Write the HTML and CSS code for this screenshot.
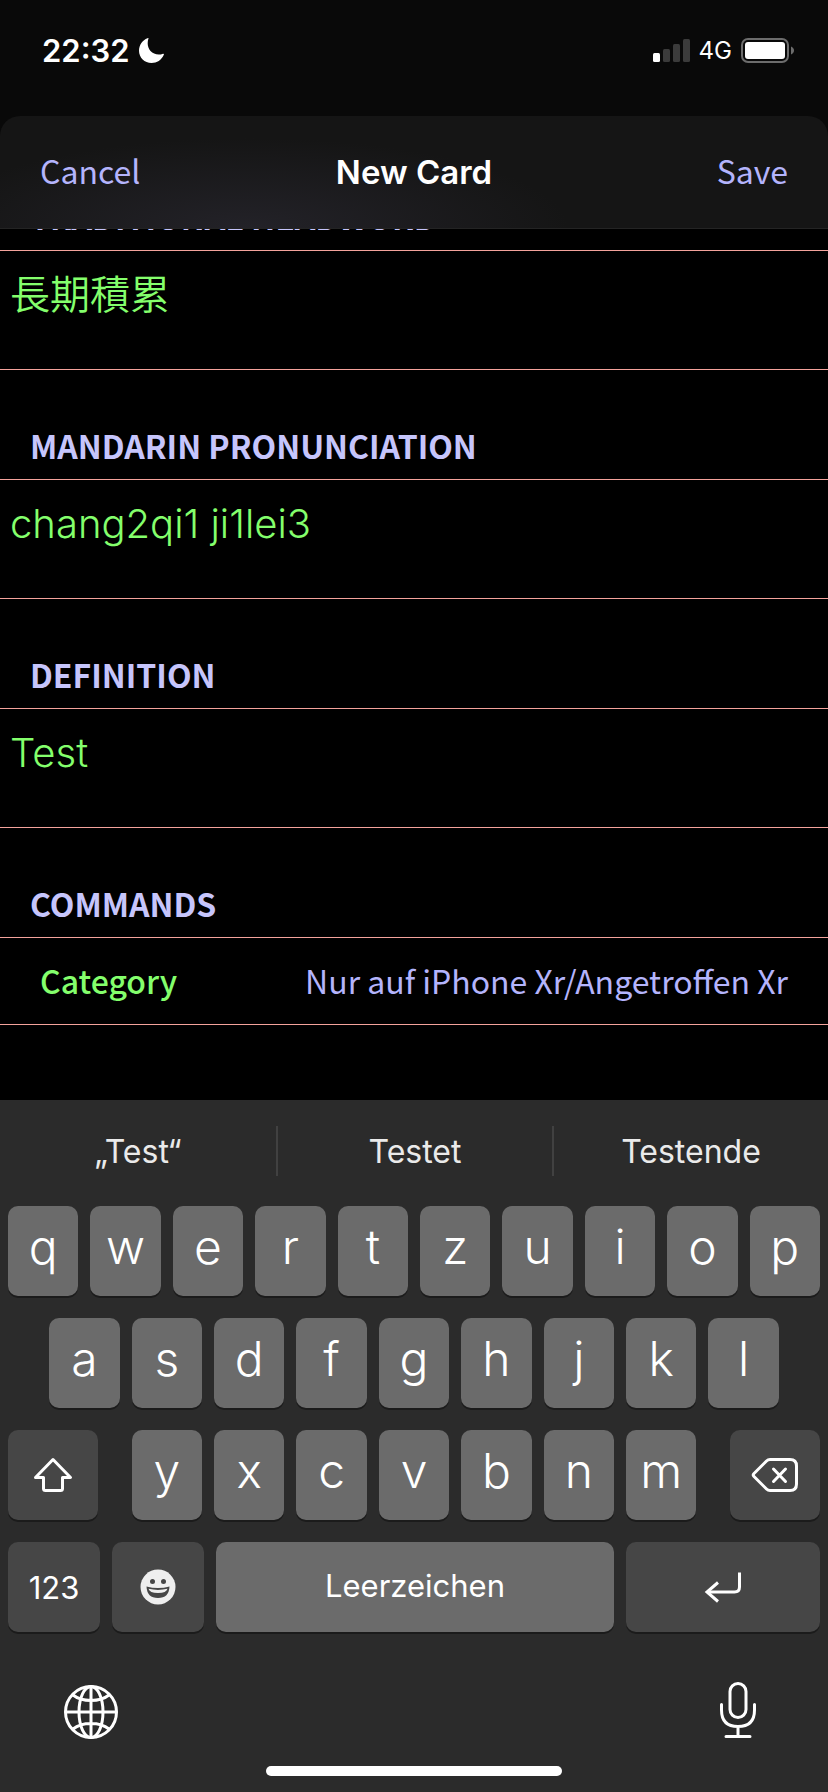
FILE: index.html
```html
<!DOCTYPE html>
<html lang="en">
<head>
  <meta charset="UTF-8">
  <meta name="viewport" content="width=device-width, initial-scale=1">
  <title>New Card</title>
  <link rel="stylesheet" href="styles.css">
</head>
<body>
  <div class="status-bar">
    <div class="status-left">
      <span class="time">22:32</span>
      <svg class="moon" viewBox="0 0 25 25" width="25" height="25"><path d="M9.500 0.300C8 5 8.500 9.500 11.500 13C14.500 16.300 19.500 17.500 24 15.700C25 15.400 25.100 16.200 24.700 17C22.500 22 18 25 12.500 25C5.500 25 0 19.500 0 12.700C0 7 3.500 2 8.500 0.200C9.200 0 9.600 0 9.500 0.300Z" fill="#fff"/></svg>
    </div>
    <div class="status-right">
      <svg viewBox="0 0 37 23" width="37" height="23">
        <rect x="0" y="14" width="7" height="9" rx="1.500" fill="#fff"/>
        <rect x="10" y="10" width="7" height="13" rx="1.500" fill="#3b3b3b"/>
        <rect x="20" y="5" width="7" height="18" rx="1.500" fill="#3b3b3b"/>
        <rect x="30" y="0" width="7" height="23" rx="1.500" fill="#3b3b3b"/>
      </svg>
      <span class="network">4G</span>
      <svg viewBox="0 0 53 25" width="53" height="25">
        <rect x="1" y="1" width="46" height="23" rx="6" fill="none" stroke="#6c6c6c" stroke-width="2"/>
        <rect x="4" y="4" width="40" height="17" rx="3" fill="#fff"/>
        <path d="M50 8.500C54 10 54 15 50 16.500Z" fill="#6c6c6c"/>
      </svg>
    </div>
  </div>

  <form class="sheet">
    <header class="nav">
      <button type="button" class="nav-btn">Cancel</button>
      <h1>New Card</h1>
      <button type="submit" class="nav-btn save">Save</button>
    </header>

    <div class="content">
      <label class="heading" for="headword">TRADITIONAL HEADWORD</label>
      <textarea id="headword" class="field" lang="zh-Hant">長期積累</textarea>

      <label class="heading" for="pron">MANDARIN PRONUNCIATION</label>
      <textarea id="pron" class="field" spellcheck="false">chang2qi1 ji1lei3</textarea>

      <label class="heading" for="definition">DEFINITION</label>
      <textarea id="definition" class="field" spellcheck="false">Test</textarea>

      <h2 class="heading">COMMANDS</h2>
      <button type="button" class="category">
        <span class="category-name">Category</span>
        <span>Nur auf iPhone Xr/Angetroffen Xr</span>
      </button>
    </div>
  </form>

  <div class="keyboard" lang="de">
    <div class="suggestions">
      <button type="button">„Test“</button>
      <button type="button">Testet</button>
      <button type="button">Testende</button>
    </div>

    <div class="row">
      <button type="button" class="key">q</button>
      <button type="button" class="key">w</button>
      <button type="button" class="key">e</button>
      <button type="button" class="key">r</button>
      <button type="button" class="key">t</button>
      <button type="button" class="key">z</button>
      <button type="button" class="key">u</button>
      <button type="button" class="key">i</button>
      <button type="button" class="key">o</button>
      <button type="button" class="key">p</button>
    </div>

    <div class="row">
      <button type="button" class="key">a</button>
      <button type="button" class="key">s</button>
      <button type="button" class="key">d</button>
      <button type="button" class="key">f</button>
      <button type="button" class="key">g</button>
      <button type="button" class="key">h</button>
      <button type="button" class="key">j</button>
      <button type="button" class="key">k</button>
      <button type="button" class="key">l</button>
    </div>

    <div class="row">
      <button type="button" class="key dark shift" aria-label="Shift">
        <svg viewBox="0 0 40 36" width="40" height="36" fill="none" stroke="#fff" stroke-width="3" stroke-linejoin="round"><path d="M20 2.500L37.500 20.500H29.500V31.500Q29.500 33.500 27.500 33.500H12.500Q10.500 33.500 10.500 31.500V20.500H2.500Z"/></svg>
      </button>
      <button type="button" class="key">y</button>
      <button type="button" class="key">x</button>
      <button type="button" class="key">c</button>
      <button type="button" class="key">v</button>
      <button type="button" class="key">b</button>
      <button type="button" class="key">n</button>
      <button type="button" class="key">m</button>
      <button type="button" class="key dark backspace" aria-label="Delete">
        <svg viewBox="0 0 48 36" width="48" height="36" fill="none" stroke="#fff" stroke-width="3" stroke-linecap="round" stroke-linejoin="round"><path d="M19 2.500H39Q45.500 2.500 45.500 9V27Q45.500 33.500 39 33.500H19Q17 33.500 15.500 32L3 19.500Q1.500 18 3 16.500L15.500 4Q17 2.500 19 2.500Z"/><path d="M22.500 12L34.500 24.500M34.500 12L22.500 24.500"/></svg>
      </button>
    </div>

    <div class="row">
      <button type="button" class="key dark mode">123</button>
      <button type="button" class="key dark mode" aria-label="Emoji">
        <svg viewBox="0 0 36 36" width="36" height="36">
          <circle cx="18" cy="18" r="17.500" fill="#efefef"/>
          <circle cx="12.500" cy="12.500" r="2.500" fill="#464646"/>
          <circle cx="23.500" cy="12.500" r="2.500" fill="#464646"/>
          <path d="M6.500 17.500Q18 20.500 29.500 17.500Q29 29 18 29Q7 29 6.500 17.500Z" fill="#464646"/>
          <path d="M8.500 19.800Q18 22 27.500 19.800Q26.500 24 18 24Q9.500 24 8.500 19.800Z" fill="#efefef"/>
        </svg>
      </button>
      <button type="button" class="key space">Leerzeichen</button>
      <button type="button" class="key dark return" aria-label="Return">
        <svg viewBox="0 0 38 32" width="38" height="32" fill="none" stroke="#fff" stroke-width="3"><path d="M35.500 1.500V16Q35.500 21 30.500 21H3"/><path d="M14 11.500L3 21L14 30.500"/></svg>
      </button>
    </div>

    <div class="bottom">
      <button type="button" class="plain" aria-label="Keyboard language">
        <svg viewBox="0 0 54 54" width="54" height="54" fill="none" stroke="#fff" stroke-width="3">
          <circle cx="27" cy="27" r="25.500"/>
          <ellipse cx="27" cy="27" rx="12" ry="25.500"/>
          <path d="M27 1.500V52.500M1.500 27H52.500M9 10Q16 15.500 27 15.500T45 10M9 44Q16 38.500 27 38.500T45 44"/>
        </svg>
      </button>
      <button type="button" class="plain" aria-label="Dictate">
        <svg viewBox="0 0 38 62" width="38" height="62" fill="none" stroke="#fff" stroke-width="3" stroke-linecap="round">
          <rect x="11" y="2.500" width="16" height="34" rx="8"/>
          <path d="M2.500 23.500V29Q2.500 45.500 19 45.500T35.500 29V23.500M19 45.500V55.500M7 55.500H31"/>
        </svg>
      </button>
    </div>
    <div class="home-bar"></div>
  </div>
</body>
</html>
```

FILE: styles.css
```css
* {
  box-sizing: border-box;
}
body {
  margin: 0;
  min-height: 100vh;
  display: flex;
  flex-direction: column;
  background: #090909;
  color: #fff;
  font-family: Inter, "Noto Sans CJK TC", sans-serif;
}
button {
  padding: 0;
  border: none;
  background: none;
  color: inherit;
  font: inherit;
  cursor: pointer;
}
svg {
  display: block;
}

/* status bar */
.status-bar {
  height: 116px;
  padding: 0 34px 16px 42px;
  display: flex;
  align-items: center;
  justify-content: space-between;
}
.status-left,
.status-right {
  display: flex;
  align-items: center;
  gap: 9px;
}
.time {
  font-size: 31px;
  font-weight: 600;
}
.network {
  font-size: 24px;
  font-weight: 400;
}

/* sheet */
.sheet {
  flex: 1;
  display: flex;
  flex-direction: column;
}
.nav {
  position: relative;
  z-index: 1;
  height: 113px;
  padding: 0 40px;
  display: grid;
  grid-template-columns: 1fr auto 1fr;
  align-items: center;
  background: radial-gradient(ellipse 320px 90px at 30% 100%, #232228, transparent), #151515;
  border-bottom: 1px solid #242424;
  border-radius: 20px 20px 0 0;
}
.nav h1 {
  margin: 0;
  font-size: 33px;
  font-weight: 600;
}
.nav-btn {
  justify-self: start;
  padding-bottom: 5px;
  font-family: "Noto Sans CJK TC", sans-serif;
  font-size: 32px;
  color: #b4b4fc;
}
.save {
  justify-self: end;
}
.content {
  flex: 1;
  margin-top: -88px;
  background: #000;
}
.heading {
  display: flex;
  align-items: flex-end;
  height: 109px;
  margin: 0;
  padding: 0 30px 9px;
  font-family: "Noto Sans CJK TC", sans-serif;
  font-size: 32px;
  font-weight: 700;
  line-height: 50px;
  color: #c6c5fc;
}
.field {
  display: block;
  width: 100%;
  height: 120px;
  padding: 20px 10px;
  border: solid #f4a39c;
  border-width: 1px 0;
  outline: none;
  resize: none;
  background: #000;
  color: #84ff6c;
  font-family: Inter, "Noto Sans CJK TC", sans-serif;
  font-size: 40px;
  font-weight: 350;
  line-height: 48px;
}
.category {
  display: flex;
  align-items: center;
  justify-content: space-between;
  width: 100%;
  height: 88px;
  padding: 0 40px 2px;
  border: solid #f4a39c;
  border-width: 1px 0;
  font-family: "Noto Sans CJK TC", sans-serif;
  font-size: 32px;
  color: #b4b4fc;
}
.category-name {
  font-weight: 500;
  color: #84ff6c;
}

/* keyboard */
.keyboard {
  padding: 0 8px 16px;
  background: #2b2b2b;
}
.suggestions {
  display: grid;
  grid-template-columns: repeat(3, 1fr);
  align-items: center;
  height: 102px;
  margin: 0 -8px 4px;
}
.suggestions button {
  height: 50px;
  font-size: 32px;
  color: #eaeaea;
}
.suggestions button + button {
  border-left: 2px solid #414141;
}
.row {
  display: flex;
  justify-content: center;
  gap: 12px;
  margin-bottom: 22px;
}
.key {
  flex: 0 0 calc((100% - 108px) / 10);
  display: flex;
  align-items: center;
  justify-content: center;
  height: 90px;
  padding-bottom: 10px;
  border-radius: 10px;
  background: #6b6b6b;
  box-shadow: 0 2px 0 #1b1b1b;
  font-size: 48px;
  font-weight: 350;
}
.dark {
  padding: 0;
  background: #464646;
}
.shift,
.backspace {
  flex-basis: 90px;
}
.shift {
  margin-right: auto;
}
.backspace {
  margin-left: auto;
}
.mode {
  flex-basis: 92px;
  font-size: 31px;
  font-weight: 400;
}
.space {
  flex: 1;
  padding-bottom: 4px;
  font-size: 31px;
  font-weight: 400;
}
.return {
  flex-basis: 194px;
}
.bottom {
  display: flex;
  align-items: center;
  justify-content: space-between;
  height: 112px;
  padding: 4px 63px 0 56px;
}
.home-bar {
  width: 296px;
  height: 10px;
  margin: 0 auto;
  border-radius: 5px;
  background: #fff;
}
```
